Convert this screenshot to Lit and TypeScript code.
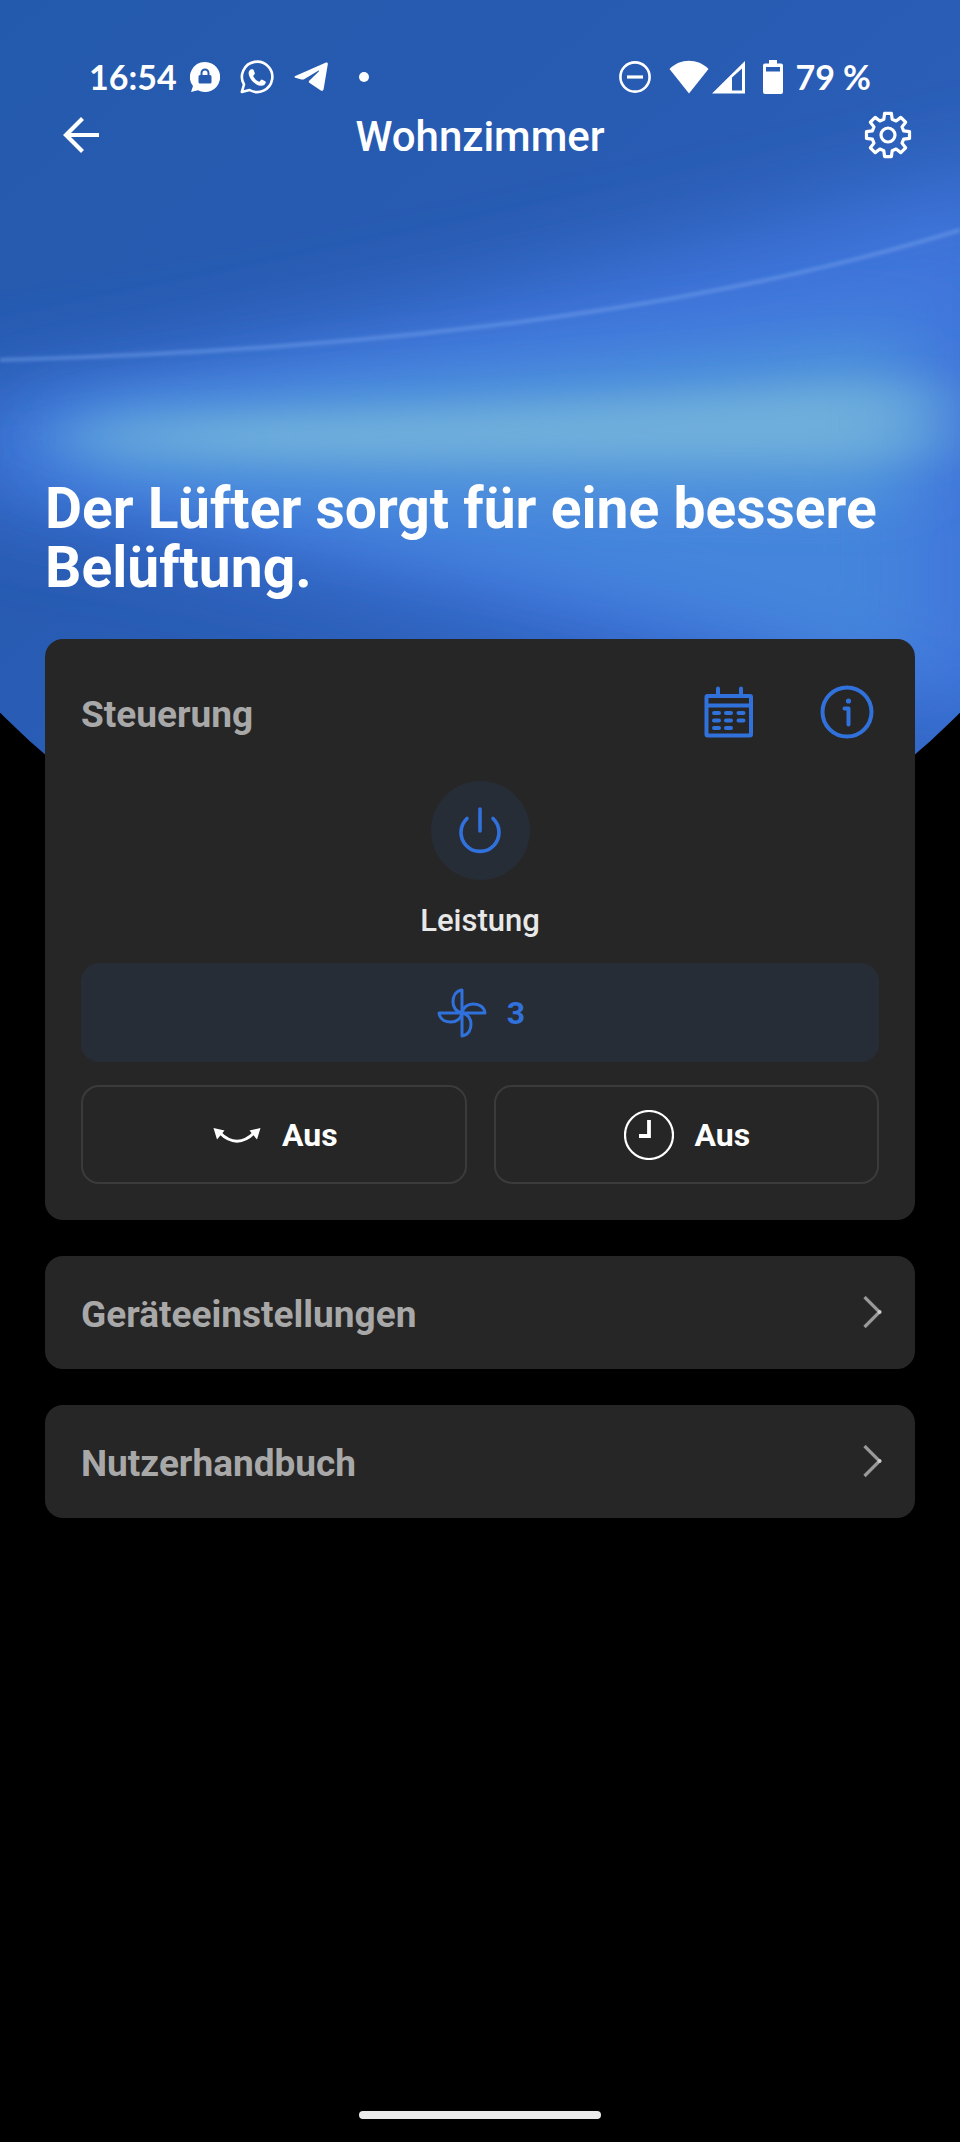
import { LitElement, html, css, svg } from "lit";
import { customElement, property } from "lit/decorators.js";

/** Outline of a cog with eight tapered teeth around the origin. */
function cogPath(teeth = 8, outer = 21.8, inner = 16.2): string {
  const point = (r: number, deg: number) => {
    const a = ((deg - 90) * Math.PI) / 180;
    return `${(r * Math.cos(a)).toFixed(2)} ${(r * Math.sin(a)).toFixed(2)}`;
  };
  let d = "";
  for (let i = 0; i < teeth; i++) {
    const a = (i * 360) / teeth;
    d += `${i ? "L" : "M"}${point(inner, a - 15)}L${point(outer, a - 9)}`;
    d += `L${point(outer, a + 9)}L${point(inner, a + 15)}`;
  }
  return d + "Z";
}

const blade = svg`<path d="M0 0V-23C-7-22-9-16-9-11C-9-6-6-1 0 0Z"/>`;

const icons = {
  lock: html`<svg width="30" height="30" viewBox="0 0 30 30" aria-hidden="true">
    <path fill="currentColor" fill-rule="evenodd" d="M15 0A15 15 0 1 1 8 28.2L1 30L3 24A15 15 0 0 1 15 0ZM10.500 13H10Q8.500 13 8.500 14.500V20Q8.500 21.500 10 21.500H20Q21.500 21.500 21.500 20V14.500Q21.500 13 20 13H19.500V11A4.500 4.500 0 0 0 10.500 11ZM12.500 13V11A2.500 2.500 0 0 1 17.500 11V13Z"/>
  </svg>`,
  phone: html`<svg width="34" height="34" viewBox="0 0 34 34" aria-hidden="true">
    <path fill="none" stroke="currentColor" stroke-width="2.600" stroke-linejoin="round" d="M1.800 32L4 24.500A15.200 15.200 0 1 1 9.500 30Z"/>
    <path fill="currentColor" d="M10.500 9.600C8.600 11 8.100 13.300 9.200 16C11.200 21 15.300 24.800 20.500 25.800C23.200 26.200 25.200 24.900 25.800 22.600Q26 21.600 25.200 21.200L22.200 19.700Q21.500 19.400 21 20L19.700 21.600Q19.300 22 18.600 21.600C16.300 20.400 14.600 18.600 13.400 16.400Q13.100 15.900 13.500 15.400L14.700 13.900Q15 13.400 14.800 12.900L13.600 10Q13.300 9.300 12.600 9.300Q11.200 9.200 10.500 9.600Z"/>
  </svg>`,
  plane: html`<svg width="34" height="30" viewBox="0 0 34 30" aria-hidden="true">
    <path fill="currentColor" d="M1.300 14L32 .600Q34 0 33.800 2.200L29.600 27.200Q29 29.600 26.800 28.400L15.300 20.800Q14.200 19.800 15.200 18.800L24.800 9.500Q25.600 8.300 24.200 8.700L10.500 17Q9 17.900 7.400 17.400L1.400 15.800Q-.400 15 1.300 14Z"/>
  </svg>`,
  silent: html`<svg width="34" height="34" viewBox="0 0 34 34" aria-hidden="true">
    <circle cx="17" cy="17" r="14.600" fill="none" stroke="currentColor" stroke-width="2.600"/>
    <path d="M9 17H25" stroke="currentColor" stroke-width="3.200"/>
  </svg>`,
  wifi: html`<svg width="40" height="34" viewBox="0 0 40 34" aria-hidden="true">
    <path fill="currentColor" d="M.500 9C11-2 29-2 39.500 9L20 33.500Z"/>
  </svg>`,
  signal: html`<svg width="34" height="34" viewBox="0 0 34 34" aria-hidden="true">
    <path fill="currentColor" fill-rule="evenodd" d="M0 33.500L33 1V33.500ZM20 17.500V30.500H30V8.500Z"/>
  </svg>`,
  battery: html`<svg width="20" height="34" viewBox="0 0 20 34" aria-hidden="true">
    <path fill="currentColor" fill-rule="evenodd" d="M6 0H14V3.500H18Q20 3.500 20 5.500V32Q20 34 18 34H2Q0 34 0 32V5.500Q0 3.500 2 3.500H6ZM3 7V11.500H17V7Z"/>
  </svg>`,
  back: html`<svg width="38" height="38" viewBox="0 0 38 38" aria-hidden="true">
    <path fill="none" stroke="currentColor" stroke-width="4.200" d="M37 19H4M20.500 2.500L4 19L20.500 35.500"/>
  </svg>`,
  cog: html`<svg width="48" height="48" viewBox="-24 -24 48 48" aria-hidden="true">
    <g fill="none" stroke="currentColor" stroke-width="3.200" stroke-linejoin="round">
      <path d=${cogPath()}/><circle r="7"/>
    </g>
  </svg>`,
  calendar: html`<svg width="50" height="52" viewBox="0 0 50 52" aria-hidden="true">
    <g fill="none" stroke="currentColor" stroke-width="4">
      <rect x="2.500" y="10" width="44.500" height="39.500" rx="1"/>
      <path d="M3 19.500H47"/>
      <path stroke-linecap="round" d="M14 2.500V9M37 2.500V9M10 27H15M22 27H27M34.500 27H39.500M10 34.500H15M22 34.500H27M34.500 34.500H39.500M10 42H15M22 42H27"/>
    </g>
  </svg>`,
  info: html`<svg width="54" height="54" viewBox="0 0 54 54" aria-hidden="true">
    <circle cx="27" cy="27" r="24.500" fill="none" stroke="currentColor" stroke-width="4"/>
    <circle cx="28.500" cy="16" r="2.600" fill="currentColor"/>
    <path fill="none" stroke="currentColor" stroke-width="4" stroke-linecap="round" stroke-linejoin="round" d="M24.500 23.500H28.500V39.500"/>
  </svg>`,
  power: html`<svg width="50" height="50" viewBox="0 0 50 50" aria-hidden="true">
    <path fill="none" stroke="currentColor" stroke-width="3.600" stroke-linecap="round" d="M25 3V25M12 12.500A19 19 0 1 0 38 12.500"/>
  </svg>`,
  fan: html`<svg width="50" height="50" viewBox="-25 -25 50 50" aria-hidden="true">
    <g fill="none" stroke="currentColor" stroke-width="3" stroke-linejoin="round">
      <g>${blade}</g>
      <g transform="rotate(90)">${blade}</g>
      <g transform="rotate(180)">${blade}</g>
      <g transform="rotate(270)">${blade}</g>
    </g>
  </svg>`,
  swing: html`<svg width="50" height="50" viewBox="0 0 50 50" aria-hidden="true">
    <path fill="none" stroke="currentColor" stroke-width="3" d="M7.500 22.500Q25 40 42.500 22.500"/>
    <path fill="currentColor" d="M1.500 18L12.500 20.500L5 29.500ZM48.500 18L37.500 20.500L45 29.500Z"/>
  </svg>`,
  clock: html`<svg width="50" height="50" viewBox="0 0 50 50" aria-hidden="true">
    <circle cx="25" cy="25" r="24" fill="none" stroke="currentColor" stroke-width="2.200"/>
    <path fill="none" stroke="currentColor" stroke-width="3.800" d="M25 10V26H15"/>
  </svg>`,
  chevron: html`<svg width="20" height="34" viewBox="0 0 20 34" aria-hidden="true">
    <path fill="none" stroke="#999" stroke-width="3.200" d="M2.500 1L17.500 16L2.500 31"/>
    <circle cx="17.500" cy="16" r="2" fill="#ccc"/>
  </svg>`,
};

@customElement("hero-backdrop")
class HeroBackdrop extends LitElement {
  static styles = css`
    :host {
      display: block;
    }
    .art {
      display: block;
      width: 100%;
      height: 800px;
    }
  `;

  render() {
    return html`<svg class="art" viewBox="0 0 960 800" preserveAspectRatio="none" aria-hidden="true">
      <defs>
        <clipPath id="dome"><circle cx="480" cy="245" r="670"/></clipPath>
        <linearGradient id="base" x1="0" y1="0" x2="1" y2="1">
          <stop offset="0" stop-color="#245aae"/>
          <stop offset=".4" stop-color="#285bb2"/>
          <stop offset="1" stop-color="#3267c6"/>
        </linearGradient>
        <linearGradient id="beam" x1="0" y1="0" x2="1" y2="0">
          <stop offset="0" stop-color="#6eaedc" stop-opacity=".3"/>
          <stop offset=".2" stop-color="#6eaedc"/>
          <stop offset=".88" stop-color="#6eaedc"/>
          <stop offset="1" stop-color="#6eaedc" stop-opacity=".4"/>
        </linearGradient>
        <filter id="wide" x="-20%" y="-40%" width="140%" height="180%"><feGaussianBlur stdDeviation="46 44"/></filter>
        <filter id="medium" x="-20%" y="-40%" width="140%" height="180%"><feGaussianBlur stdDeviation="44 28"/></filter>
        <filter id="halo" x="-20%" y="-100%" width="140%" height="300%"><feGaussianBlur stdDeviation="40 24"/></filter>
        <filter id="narrow" x="-20%" y="-100%" width="140%" height="300%"><feGaussianBlur stdDeviation="34 15"/></filter>
        <filter id="line" x="-5%" y="-10%" width="110%" height="120%"><feGaussianBlur stdDeviation="1.4"/></filter>
      </defs>
      <g clip-path="url(#dome)">
        <rect width="960" height="800" fill="url(#base)"/>
        <path d="M-40 400C240 345 620 270 1030 160V730C700 670 380 570 -40 500Z" fill="#3f76dc" filter="url(#wide)"/>
        <path d="M50 410C300 370 600 345 920 310V690C760 610 400 550 50 475Z" fill="#4585dc" filter="url(#medium)"/>
        <path d="M90 412C360 395 640 385 900 355V500C600 495 350 490 90 468Z" fill="#569adb" filter="url(#halo)"/>
        <path d="M60 425C360 414 640 405 950 380V458C600 460 350 460 60 450Z" fill="url(#beam)" filter="url(#narrow)"/>
        <path d="M0 360C380 350 700 310 960 230" fill="none" stroke="#78a4ee" stroke-opacity=".42" stroke-width="4.500" filter="url(#line)"/>
      </g>
    </svg>`;
  }
}

@customElement("link-card")
class LinkCard extends LitElement {
  @property() label = "";
  @property() target = "#";

  static styles = css`
    :host {
      display: block;
    }
    .link {
      display: flex;
      align-items: center;
      justify-content: space-between;
      height: 113px;
      padding: 0 33px 0 36px;
      box-sizing: border-box;
      border-radius: 18px;
      background: #262626;
      color: #a8a8a8;
      text-decoration: none;
      font-size: 37px;
      font-weight: 700;
      line-height: 44px;
    }
    .label {
      padding-top: 4px;
    }
    svg {
      display: block;
    }
  `;

  render() {
    return html`<a class="link" href=${this.target}>
      <span class="label">${this.label}</span>${icons.chevron}
    </a>`;
  }
}

@customElement("app-root")
class AppRoot extends LitElement {
  static styles = css`
    :host {
      display: flex;
      flex-direction: column;
      position: relative;
      min-height: 100vh;
      background: #000;
      color: #fff;
      font-family: Roboto, "Liberation Sans", sans-serif;
    }
    svg {
      display: block;
      flex: none;
    }
    h1,
    h2,
    p {
      margin: 0;
    }
    button {
      display: flex;
      align-items: center;
      justify-content: center;
      margin: 0;
      padding: 0;
      border: 0;
      background: none;
      color: inherit;
      font: inherit;
      cursor: pointer;
    }
    .backdrop {
      position: absolute;
      inset: 0 0 auto;
    }
    .page {
      position: relative;
      display: flex;
      flex-direction: column;
      flex: 1;
    }
    .status {
      display: flex;
      align-items: center;
      justify-content: space-between;
      height: 42px;
      padding: 56px 89px 0;
      font-family: Lato, sans-serif;
      font-size: 34px;
      font-weight: 700;
      line-height: 42px;
    }
    .group {
      display: flex;
      align-items: center;
    }
    .notices {
      display: flex;
      align-items: center;
      gap: 20px;
      padding-left: 13px;
    }
    .dot {
      width: 10px;
      height: 10px;
      margin-left: 11px;
      border-radius: 50%;
      background: #fff;
    }
    .radio {
      display: flex;
      gap: 3px;
      padding: 0 17px;
    }
    .percent {
      padding-left: 12px;
    }
    .toolbar {
      display: grid;
      grid-template-columns: 1fr auto 1fr;
      align-items: center;
      height: 74px;
      padding: 0 48px;
    }
    .title {
      padding-top: 3px;
      font-size: 42px;
      font-weight: 500;
      line-height: 48px;
    }
    .end {
      justify-self: end;
    }
    .start {
      justify-self: start;
      padding-left: 14px;
    }
    .content {
      display: flex;
      flex-direction: column;
      gap: 36px;
      padding: 307px 45px 0;
    }
    .headline {
      padding-bottom: 6px;
      font-size: 57px;
      font-weight: 700;
      line-height: 59px;
    }
    .panel {
      display: flex;
      flex-direction: column;
      padding: 36px;
      border-radius: 18px;
      background: #262626;
    }
    .head {
      display: flex;
      align-items: center;
      justify-content: space-between;
      height: 76px;
      padding-right: 5px;
    }
    .name {
      padding-top: 3px;
      color: #a8a8a8;
      font-size: 37px;
      font-weight: 700;
      line-height: 44px;
    }
    .tools {
      display: flex;
      align-items: center;
      gap: 66px;
      padding-bottom: 2px;
      color: #3071dc;
    }
    .power {
      display: flex;
      flex-direction: column;
      align-items: center;
      gap: 21px;
      padding: 30px 0 23px;
      color: #e8e8e8;
      font-size: 31px;
      font-weight: 500;
      line-height: 39px;
    }
    .round {
      width: 99px;
      height: 99px;
      border-radius: 50%;
      background: #272d36;
      color: #3071dc;
    }
    .modes {
      display: grid;
      grid-template-columns: 1fr 1fr;
      gap: 23px 27px;
    }
    .mode {
      gap: 20px;
      height: 99px;
      padding-left: 2px;
      box-sizing: border-box;
      border: 2px solid #3b3b3b;
      border-radius: 18px;
      font-size: 32px;
      font-weight: 700;
      line-height: 40px;
    }
    .speed {
      grid-column: 1 / -1;
      border-color: #272d36;
      background: #272d36;
      color: #3071dc;
    }
    .home {
      width: 242px;
      height: 8px;
      margin: auto auto 23px;
      border-radius: 4px;
      background: #ebebeb;
    }
  `;

  render() {
    return html`
      <hero-backdrop class="backdrop"></hero-backdrop>
      <div class="page">
        <div class="status">
          <div class="group">
            <span>16:54</span>
            <div class="notices">${icons.lock}${icons.phone}${icons.plane}<span class="dot"></span></div>
          </div>
          <div class="group">
            ${icons.silent}
            <div class="radio">${icons.wifi}${icons.signal}</div>
            ${icons.battery}<span class="percent">79 %</span>
          </div>
        </div>
        <header class="toolbar">
          <button class="start" aria-label="Zurück">${icons.back}</button>
          <h1 class="title">Wohnzimmer</h1>
          <button class="end" aria-label="Einstellungen">${icons.cog}</button>
        </header>
        <main class="content">
          <p class="headline">Der Lüfter sorgt für eine bessere Belüftung.</p>
          <section class="panel">
            <div class="head">
              <h2 class="name">Steuerung</h2>
              <div class="tools">
                <button aria-label="Zeitplan">${icons.calendar}</button>
                <button aria-label="Info">${icons.info}</button>
              </div>
            </div>
            <div class="power">
              <button class="round" aria-labelledby="power-label">${icons.power}</button>
              <span id="power-label">Leistung</span>
            </div>
            <div class="modes">
              <button class="mode speed">${icons.fan}<span>3</span></button>
              <button class="mode">${icons.swing}<span>Aus</span></button>
              <button class="mode">${icons.clock}<span>Aus</span></button>
            </div>
          </section>
          <link-card label="Geräteeinstellungen" target="#einstellungen"></link-card>
          <link-card label="Nutzerhandbuch" target="#handbuch"></link-card>
        </main>
        <div class="home"></div>
      </div>
    `;
  }
}
